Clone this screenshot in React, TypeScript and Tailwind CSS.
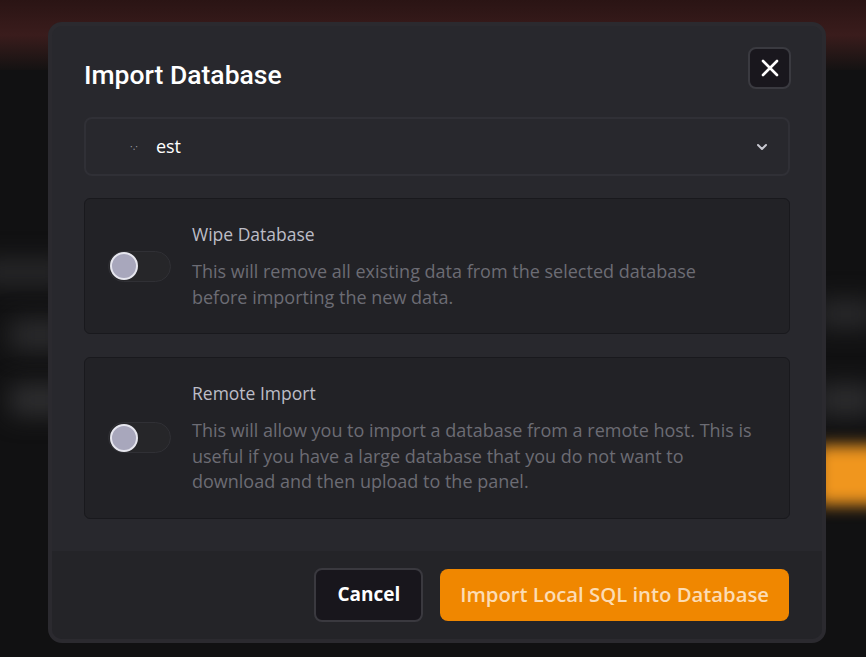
import { useState } from "react"
import type React from "react"

const Toggle = ({ on, onChange }: { on: boolean; onChange: () => void }) => (
  <button
    onClick={onChange}
    className="relative flex h-[31px] w-[63px] shrink-0 items-center rounded-full border border-[#303035] bg-[#262629]"
  >
    <span
      className={`ml-[1px] h-[28px] w-[28px] rounded-full border-2 border-[#e6e6ee] bg-[#a8a7bc] ${on ? "translate-x-[32px]" : ""}`}
    />
  </button>
)

const OptionCard = ({ title, desc }: { title: string; desc: React.ReactNode }) => {
  const [on, setOn] = useState(false)
  return (
    <div className="flex items-center gap-[21px] rounded-md border border-[#19191d] bg-[#222226] py-[23px] pl-[23px] pr-[20px]">
      <Toggle on={on} onChange={() => setOn(!on)} />
      <div>
        <div className="text-[17.5px] leading-[25px] text-[#bdbdc6]">{title}</div>
        <p className="mt-[12px] text-[18px] leading-[25.5px] text-[#6c6c74]">{desc}</p>
      </div>
    </div>
  )
}

export default function App() {
  return (
    <div
      className="relative h-[657px] w-[866px] overflow-hidden bg-[#111112]"
      style={{ fontFamily: '"Open Sans", "Noto Sans", sans-serif' }}
    >
      {/* blurred page behind the overlay */}
      <div className="absolute inset-x-0 top-0 h-[70px] bg-gradient-to-b from-[#2a1414] via-[#3a1c1c] to-[#141212]" />
      <div className="absolute left-[-20px] top-[260px] h-[24px] w-[90px] rounded bg-[#2a2a2c] blur-md" />
      <div className="absolute left-[10px] top-[320px] h-[30px] w-[60px] rounded bg-[#2c2c2e] blur-md" />
      <div className="absolute left-[10px] top-[385px] h-[30px] w-[60px] rounded bg-[#303032] blur-md" />
      <div className="absolute right-[-10px] top-[300px] h-[28px] w-[60px] rounded bg-[#2a2a2c] blur-md" />
      <div className="absolute right-[-10px] top-[385px] h-[30px] w-[60px] rounded bg-[#2e2e30] blur-md" />
      <div className="absolute right-[-20px] top-[445px] h-[60px] w-[70px] rounded bg-[#f0961e] blur-sm" />

      <div className="relative pl-[48px] pt-[22px]">
        <div className="w-[778px] overflow-hidden rounded-[14px] border-4 border-[#2b2a2f] bg-[#28282d]">
          <div className="px-8 pb-8 pt-[21px]">
            <div className="flex items-start justify-between">
              <h2
                className="mt-[14px] text-[26.5px] font-medium leading-[28px] text-white"
                style={{ fontFamily: "Roboto, sans-serif" }}
              >
                Import Database
              </h2>
              <button className="-mr-[1px] flex h-[42px] w-[43px] items-center justify-center rounded-lg border-2 border-[#3a3a40] bg-[#19171d]">
                <svg width="18" height="18" viewBox="0 0 18 18" fill="none" stroke="white" strokeWidth="2.6" strokeLinecap="round">
                  <path d="M2 2l14 14M16 2L2 16" />
                </svg>
              </button>
            </div>

            <div className="mt-[28px] flex h-[59px] items-center justify-between rounded-lg border-2 border-[#303036] bg-[#28282d] pl-[44px] pr-[18px]">
              <div className="flex items-center text-[18px] text-white">
                <span className="mr-[18px] text-[10px] text-[#9a9aa0]">·.·</span>
                <span>est</span>
              </div>
              <svg width="16" height="16" viewBox="0 0 24 24" fill="none" stroke="#c8c8d0" strokeWidth="3" strokeLinecap="round" strokeLinejoin="round">
                <path d="M6 9l6 6 6-6" />
              </svg>
            </div>

            <div className="mt-[22px] flex flex-col gap-[23px]">
              <OptionCard
                title="Wipe Database"
                desc={
                  <>
                    This will remove all existing data from the selected database
                    <br />
                    before importing the new data.
                  </>
                }
              />
              <OptionCard
                title="Remote Import"
                desc="This will allow you to import a database from a remote host. This is useful if you have a large database that you do not want to download and then upload to the panel."
              />
            </div>
          </div>

          <div className="flex h-[88px] items-center justify-end gap-[17px] bg-[#242428] pr-[33px]">
            <button className="h-[54px] rounded-lg border-2 border-[#3a393f] bg-[#18161c] px-[21px] text-[19px] font-bold text-white">
              Cancel
            </button>
            <button className="h-[52px] rounded-lg bg-[#f08700] px-[20px] text-[20.3px] font-semibold text-[#fcdcb4]">
              Import Local SQL into Database
            </button>
          </div>
        </div>
      </div>
    </div>
  )
}
